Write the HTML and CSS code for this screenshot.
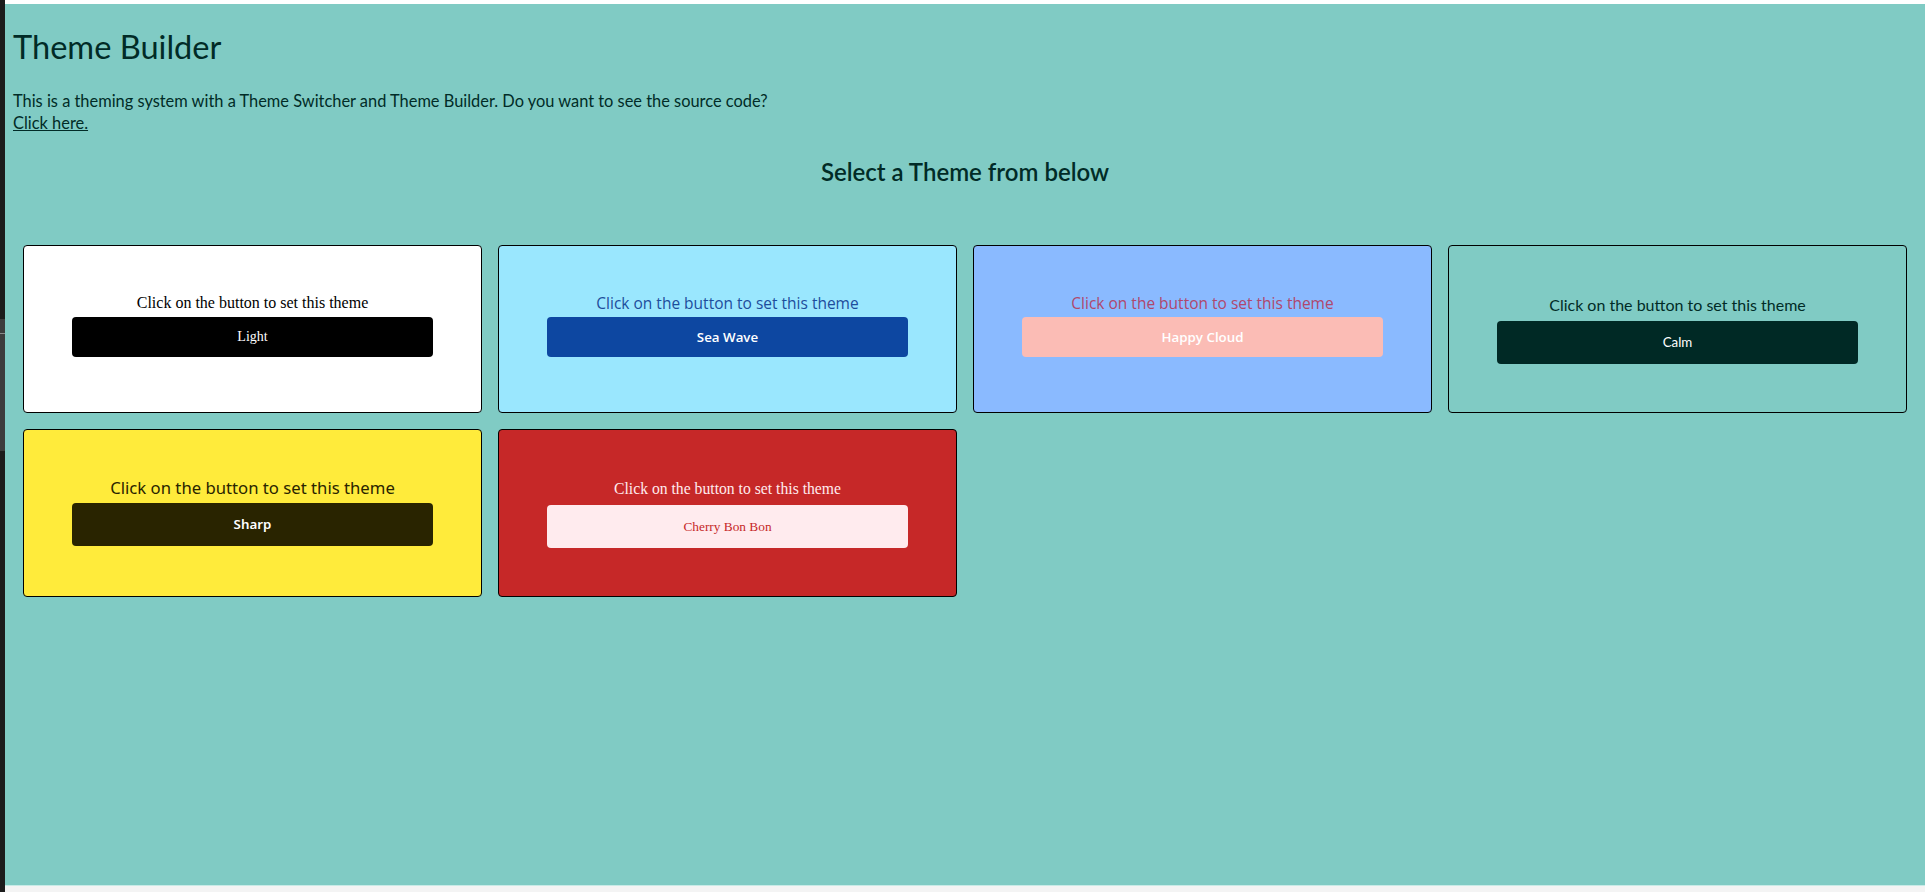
FILE: index.html
```html
<!DOCTYPE html>
<html lang="en">
<head>
<meta charset="utf-8">
<title>Theme Builder</title>
<link rel="stylesheet" href="styles.css">
</head>
<body>
<div class="screen">
  <div class="dock">
    <div class="dock-panel"><div class="dock-line"></div></div>
  </div>
  <div class="stage">
    <div class="topbar"></div>
    <main class="frame">
      <h1 class="title">Theme Builder</h1>
      <p class="intro">This is a theming system with a Theme Switcher and Theme Builder. Do you want to see the source code?<br><a class="link" href="#">Click here.</a></p>
      <h2 class="subtitle">Select a Theme from below</h2>
      <section class="grid">
        <div class="card t-light">
          <p class="card-text">Click on the button to set this theme</p>
          <button class="card-btn">Light</button>
        </div>
        <div class="card t-sea">
          <p class="card-text">Click on the button to set this theme</p>
          <button class="card-btn">Sea Wave</button>
        </div>
        <div class="card t-cloud">
          <p class="card-text">Click on the button to set this theme</p>
          <button class="card-btn">Happy Cloud</button>
        </div>
        <div class="card t-calm">
          <p class="card-text">Click on the button to set this theme</p>
          <button class="card-btn">Calm</button>
        </div>
        <div class="card t-sharp">
          <p class="card-text">Click on the button to set this theme</p>
          <button class="card-btn">Sharp</button>
        </div>
        <div class="card t-cherry">
          <p class="card-text">Click on the button to set this theme</p>
          <button class="card-btn">Cherry Bon Bon</button>
        </div>
      </section>
    </main>
    <div class="bottombar"></div>
  </div>
</div>
</body>
</html>
```
FILE: styles.css
```css
* { box-sizing: border-box; }
html, body { margin: 0; padding: 0; }
body {
  background: #ffffff;
  width: 1925px;
  height: 892px;
  overflow: hidden;
}
.screen {
  display: flex;
  height: 892px;
}
.dock {
  width: 5px;
  flex: none;
  background: #1c1c1c;
  padding-top: 319px;
}
.dock-panel {
  height: 132px;
  background: #3c3c3c;
  padding-top: 14px;
}
.dock-line {
  height: 1px;
  background: #8a8a8a;
}
.stage {
  flex: 1;
  display: flex;
  flex-direction: column;
}
.topbar { height: 4px; background: #ffffff; }
.bottombar { flex: 1; background: #f4f4f4; border-top: 1px solid #c8ebe7; }
.frame {
  height: 881px;
  background: #80cbc4;
  color: #012b27;
  font-family: Lato, "Noto Sans", sans-serif;
  padding: 21px 8px 0;
}
.title {
  margin: 0 0 21px;
  font-size: 32.6px;
  line-height: 44px;
  font-weight: 400;
}
.intro {
  margin: 0;
  font-size: 16.4px;
  line-height: 22px;
}
.link { color: #012b27; text-decoration: underline; }
.subtitle {
  margin: 21px 0 57px;
  text-align: center;
  font-size: 24px;
  line-height: 33px;
  font-weight: 600;
}
.grid {
  margin: 0 10px;
  display: grid;
  grid-template-columns: repeat(4, 1fr);
  gap: 16px;
}
.card {
  border: 1px solid #000;
  border-radius: 4px;
  padding: 48px;
  display: flex;
  flex-direction: column;
  text-align: center;
}
.card-text {
  margin: 0 0 5px;
  font-size: 16px;
  line-height: 18px;
}
.card-btn {
  border: none;
  border-radius: 4px;
  padding: 12px 0;
  width: 100%;
  font-size: 13.333px;
  line-height: 16px;
  font-family: inherit;
}
.t-light { background: #ffffff; color: #000; font-family: "Liberation Serif", serif; }
.t-light .card-btn { background: #000; color: #fff; font-size: 14px; }
.t-sea { background: #9ae7fe; color: #1d4d9c; font-family: "Open Sans", sans-serif; }
.t-sea .card-text, .t-cloud .card-text { font-size: 15.5px; }
.t-sea .card-btn { background: #0d47a1; color: #fff; font-weight: 600; }
.t-cloud { background: #8abaff; color: #b0476c; font-family: "Open Sans", sans-serif; }
.t-cloud .card-btn { background: #fbbcb5; color: #fff; font-weight: 600; }
.t-calm { background: #80cbc4; color: #012b27; font-family: Lato, sans-serif; }
.t-calm .card-text { line-height: 22px; }
.t-calm .card-btn { background: #002925; color: #fff; line-height: 19px; }
.t-sharp { background: #ffeb3b; color: #292400; font-family: "Noto Sans", sans-serif; }
.t-sharp .card-text { font-size: 16.7px; line-height: 20px; }
.t-sharp .card-btn { background: #292400; color: #fff; font-weight: 600; line-height: 19px; }
.t-cherry { background: #c62828; color: #ffebee; font-family: "Liberation Serif", serif; }
.t-cherry .card-text { font-size: 15.7px; line-height: 22px; }
.t-cherry .card-btn { background: #ffebee; color: #c62828; line-height: 19px; }
```
